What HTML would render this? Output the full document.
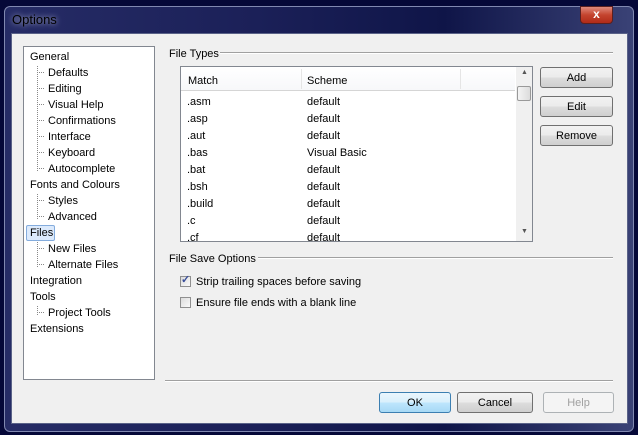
<!DOCTYPE html><html><head><style>
body{margin:0;width:638px;height:435px;background:#050838;position:relative;overflow:hidden;font-family:"Liberation Sans",sans-serif;font-size:11px;color:#000}
.a{position:absolute}
.frame{left:4px;top:6px;width:630px;height:426px;background:linear-gradient(90deg,#262c66 0%,#1b2058 40%,#0f1548 70%,#3a4276 100%);border:1px solid #8088b0;border-radius:6px;box-sizing:border-box}
.client{left:11px;top:33px;width:617px;height:391px;background:#f0f0f0;border:1px solid #5a6288;box-sizing:border-box}
.t{position:absolute;white-space:nowrap}
.tree{left:23px;top:46px;width:132px;height:334px;background:#fff;border:1px solid #828790;box-sizing:border-box}
.btn{position:absolute;border:1px solid #707070;border-radius:3px;background:linear-gradient(#f2f2f2 0%,#ebebeb 50%,#dddddd 51%,#cfcfcf 100%);text-align:center;box-sizing:border-box;line-height:21px}
.dv{position:absolute;border-left:1px dotted #888;width:0}
.dh{position:absolute;border-top:1px dotted #888;height:0;width:7px}
.cb{position:absolute;width:11px;height:11px;border:1px solid #8f8f8f;background:linear-gradient(135deg,#dcdcdc,#fafafa);box-sizing:border-box}
</style></head><body>
<div class="a frame"></div>
<div class="t" style="left:12px;top:12px;font-size:13px;color:#000;text-shadow:0 0 6px #c8cce0">Options</div>
<div class="a" style="left:580px;top:6px;width:33px;height:18px;border:1px solid #5a2020;border-radius:0 0 4px 4px;background:linear-gradient(#e08a7c,#c4442e 50%,#b02a18);box-sizing:border-box;color:#fff;text-align:center;font-weight:bold;font-size:12px;line-height:15px">x</div>
<div class="a client"></div>
<div class="a tree">
<div class="dv" style="left:13px;top:19px;height:105px"></div>
<div class="dv" style="left:13px;top:147px;height:25px"></div>
<div class="dv" style="left:13px;top:195px;height:25px"></div>
<div class="dv" style="left:13px;top:259px;height:9px"></div>
</div>
<div class="a" style="left:23px;top:47px">
<div class="t" style="left:7px;top:4px">General</div>
<div class="dh" style="left:14px;top:25px"></div><div class="t" style="left:25px;top:20px">Defaults</div>
<div class="dh" style="left:14px;top:41px"></div><div class="t" style="left:25px;top:36px">Editing</div>
<div class="dh" style="left:14px;top:57px"></div><div class="t" style="left:25px;top:52px">Visual Help</div>
<div class="dh" style="left:14px;top:73px"></div><div class="t" style="left:25px;top:68px">Confirmations</div>
<div class="dh" style="left:14px;top:89px"></div><div class="t" style="left:25px;top:84px">Interface</div>
<div class="dh" style="left:14px;top:105px"></div><div class="t" style="left:25px;top:100px">Keyboard</div>
<div class="dh" style="left:14px;top:121px"></div><div class="t" style="left:25px;top:116px">Autocomplete</div>
<div class="t" style="left:7px;top:132px">Fonts and Colours</div>
<div class="dh" style="left:14px;top:153px"></div><div class="t" style="left:25px;top:148px">Styles</div>
<div class="dh" style="left:14px;top:169px"></div><div class="t" style="left:25px;top:164px">Advanced</div>
<div class="a" style="left:3px;top:178px;width:27px;height:14px;border:1px solid #84acdd;border-radius:2px;background:#dceafc"></div>
<div class="t" style="left:7px;top:180px">Files</div>
<div class="dh" style="left:14px;top:201px"></div><div class="t" style="left:25px;top:196px">New Files</div>
<div class="dh" style="left:14px;top:217px"></div><div class="t" style="left:25px;top:212px">Alternate Files</div>
<div class="t" style="left:7px;top:228px">Integration</div>
<div class="t" style="left:7px;top:244px">Tools</div>
<div class="dh" style="left:14px;top:265px"></div><div class="t" style="left:25px;top:260px">Project Tools</div>
<div class="t" style="left:7px;top:276px">Extensions</div>
</div>
<div class="t" style="left:169px;top:48px">File Types</div>
<div class="a" style="left:220px;top:52px;width:393px;border-top:1px solid #a0a0a0;border-bottom:1px solid #fff"></div>
<div class="a" style="left:180px;top:66px;width:353px;height:176px;border:1px solid #828790;background:#fff;box-sizing:border-box;overflow:hidden">
<div class="a" style="left:0;top:0;width:334px;height:23px;background:linear-gradient(#fff,#f7f8fa);border-bottom:1px solid #d5d5d5"></div>
<div class="a" style="left:120px;top:2px;height:20px;border-left:1px solid #e5e5e5"></div>
<div class="a" style="left:279px;top:2px;height:20px;border-left:1px solid #e5e5e5"></div>
<div class="t" style="left:7px;top:8px">Match</div><div class="t" style="left:126px;top:8px">Scheme</div>
<div class="a" style="left:335px;top:0;width:17px;height:176px;background:#f0f0f0"></div>
<div class="t" style="left:340px;top:2px;font-size:7px;color:#555">▲</div>
<div class="a" style="left:336px;top:19px;width:14px;height:15px;border:1px solid #999;border-radius:2px;background:linear-gradient(90deg,#f4f4f4,#dcdcdc);box-sizing:border-box"></div>
<div class="t" style="left:340px;top:161px;font-size:7px;color:#555">▼</div>
<div class="t" style="left:6px;top:29px">.asm</div><div class="t" style="left:126px;top:29px">default</div>
<div class="t" style="left:6px;top:46px">.asp</div><div class="t" style="left:126px;top:46px">default</div>
<div class="t" style="left:6px;top:63px">.aut</div><div class="t" style="left:126px;top:63px">default</div>
<div class="t" style="left:6px;top:80px">.bas</div><div class="t" style="left:126px;top:80px">Visual Basic</div>
<div class="t" style="left:6px;top:97px">.bat</div><div class="t" style="left:126px;top:97px">default</div>
<div class="t" style="left:6px;top:114px">.bsh</div><div class="t" style="left:126px;top:114px">default</div>
<div class="t" style="left:6px;top:131px">.build</div><div class="t" style="left:126px;top:131px">default</div>
<div class="t" style="left:6px;top:148px">.c</div><div class="t" style="left:126px;top:148px">default</div>
<div class="t" style="left:6px;top:165px">.cf</div><div class="t" style="left:126px;top:165px">default</div>
</div>
<div class="btn" style="left:540px;top:67px;width:73px;height:21px">Add</div>
<div class="btn" style="left:540px;top:96px;width:73px;height:21px">Edit</div>
<div class="btn" style="left:540px;top:125px;width:73px;height:21px">Remove</div>
<div class="t" style="left:169px;top:253px">File Save Options</div>
<div class="a" style="left:258px;top:257px;width:355px;border-top:1px solid #a0a0a0;border-bottom:1px solid #fff"></div>
<div class="cb" style="left:180px;top:276px"></div><div class="t" style="left:181px;top:273px;color:#3a4f9a;font-size:11px;font-weight:bold">✓</div>
<div class="t" style="left:196px;top:276px">Strip trailing spaces before saving</div>
<div class="cb" style="left:180px;top:297px"></div>
<div class="t" style="left:196px;top:297px">Ensure file ends with a blank line</div>
<div class="a" style="left:165px;top:380px;width:448px;border-top:1px solid #a0a0a0;border-bottom:1px solid #fff"></div>
<div class="btn" style="left:379px;top:392px;width:72px;height:21px;border-color:#3c7fb1;background:linear-gradient(#eaf6fd 0%,#d9f0fc 50%,#bee6fd 51%,#a7d9f5 100%)">OK</div>
<div class="btn" style="left:457px;top:392px;width:76px;height:21px">Cancel</div>
<div class="btn" style="left:543px;top:392px;width:71px;height:21px;border-color:#adb2b5;background:#f4f4f4;color:#a0a0a0">Help</div>
</body></html>
